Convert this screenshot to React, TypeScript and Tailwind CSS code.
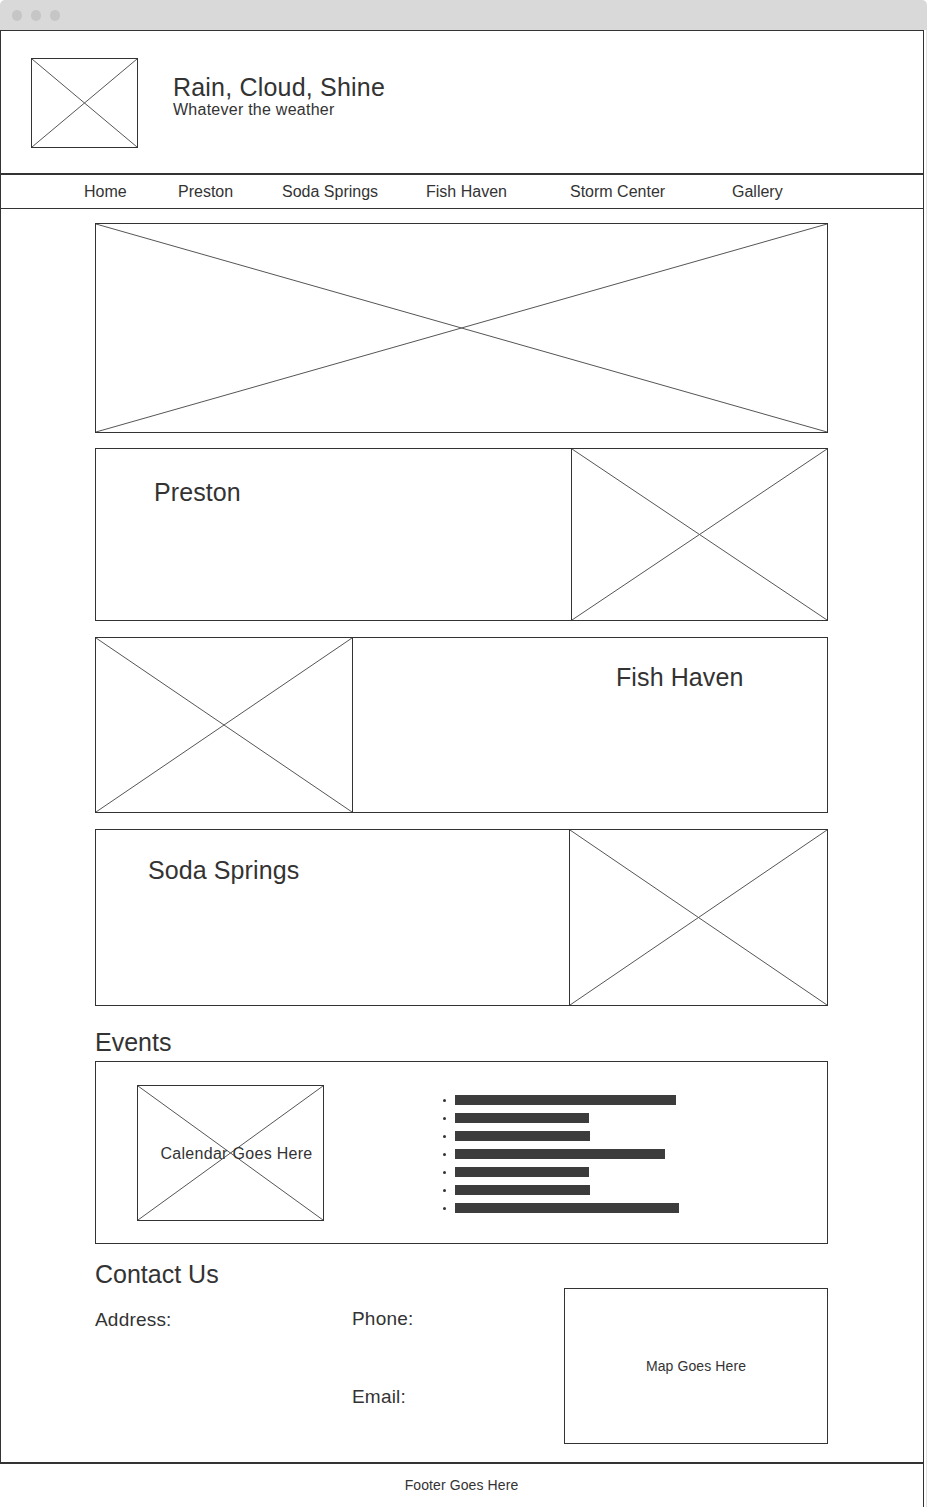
import React from "react";

const font = { fontFamily: '"Liberation Sans", Arial, sans-serif' };

function XLines() {
  return (
    <svg className="absolute inset-0 h-full w-full" viewBox="0 0 100 100" preserveAspectRatio="none">
      <line x1="0" y1="0" x2="100" y2="100" stroke="#555" strokeWidth="1" vectorEffect="non-scaling-stroke" />
      <line x1="100" y1="0" x2="0" y2="100" stroke="#555" strokeWidth="1" vectorEffect="non-scaling-stroke" />
    </svg>
  );
}

function Card({ title, side, imgW, h, pt, pl }: { title: string; side: "left" | "right"; imgW: string; h: string; pt: string; pl: string }) {
  const img = (
    <div className={`relative h-full shrink-0 ${imgW} ${side === "right" ? "border-l border-[#333]" : "border-r border-[#333]"}`}>
      <XLines />
    </div>
  );
  return (
    <div className={`flex w-[733px] border border-[#333] ${h}`}>
      {side === "left" && img}
      <div className={`flex-1 ${pt} ${pl}`}>
        <div className="text-[25px] leading-[28px] tracking-[0.1px] text-[#333]">{title}</div>
      </div>
      {side === "right" && img}
    </div>
  );
}

const bars = [221, 134, 135, 210, 134, 135, 224];

export default function App() {
  return (
    <div className="w-[927px] bg-white" style={font}>
      <div className="flex h-[30px] items-center gap-[9px] rounded-t-[5px] bg-[#d9d9d9] pl-[12px]">
        <span className="h-[11px] w-[10px] rounded-full bg-[#c6c6c6]" />
        <span className="h-[11px] w-[10px] rounded-full bg-[#c6c6c6]" />
        <span className="h-[11px] w-[10px] rounded-full bg-[#c6c6c6]" />
      </div>
      <div className="flex">
        <div className="w-[924px] border-x border-t border-b-2 border-[#333]">
          {/* header */}
          <div className="flex h-[142px] items-start">
            <div className="relative ml-[30px] mt-[27px] h-[90px] w-[107px] border border-[#333]">
              <XLines />
            </div>
            <div className="ml-[35px] mt-[42px] text-[#333]">
              <div className="text-[25px] leading-[28px] tracking-[0.2px]">Rain, Cloud, Shine</div>
              <div className="text-[16px] leading-[18px] tracking-[0.25px]">Whatever the weather</div>
            </div>
          </div>
          {/* nav */}
          <div className="flex h-[36px] items-center border-y border-t-2 border-[#333] pl-[83px] pt-[1px] text-[16px] text-[#333]">
            <span className="w-[94px]">Home</span>
            <span className="w-[104px]">Preston</span>
            <span className="w-[144px]">Soda Springs</span>
            <span className="w-[144px]">Fish Haven</span>
            <span className="w-[162px]">Storm Center</span>
            <span>Gallery</span>
          </div>
          {/* main */}
          <div className="ml-[94px] flex w-[733px] flex-col pb-[18px] pt-[14px]">
            <div className="relative h-[210px] w-[733px] border border-[#333]">
              <XLines />
            </div>
            <div className="mt-[15px]">
              <Card title="Preston" side="right" imgW="w-[256px]" h="h-[173px]" pt="pt-[29px]" pl="pl-[58px]" />
            </div>
            <div className="mt-[16px]">
              <Card title="Fish Haven" side="left" imgW="w-[257px]" h="h-[176px]" pt="pt-[25px]" pl="pl-[263px]" />
            </div>
            <div className="mt-[16px]">
              <Card title="Soda Springs" side="right" imgW="w-[258px]" h="h-[177px]" pt="pt-[26px]" pl="pl-[52px]" />
            </div>
            <div className="mt-[22px] text-[25px] leading-[28px] text-[#333]">Events</div>
            <div className="mt-[5px] flex h-[183px] border border-[#333]">
              <div className="relative ml-[41px] mt-[23px] flex h-[136px] w-[187px] items-center justify-center border border-[#333] pl-[12px] pt-[2px]">
                <XLines />
                <span className="relative text-[16px] tracking-[0.3px] text-[#333]">Calendar Goes Here</span>
              </div>
              <ul className="ml-[119px] mt-[29px] flex flex-col">
                {bars.map((w, i) => (
                  <li key={i} className="flex h-[18px] items-center">
                    <span className="h-[3px] w-[3px] rounded-full bg-[#333]" />
                    <span className="ml-[9px] h-[10px] bg-[#3c3c3c]" style={{ width: w }} />
                  </li>
                ))}
              </ul>
            </div>
            <div className="mt-[16px] text-[25px] leading-[28px] text-[#333]">Contact Us</div>
            <div className="flex text-[19px] leading-[22px] tracking-[0.2px] text-[#333]">
              <div className="w-[257px] pt-[21px]">Address:</div>
              <div className="w-[212px] pt-[20px]">
                <div>Phone:</div>
                <div className="mt-[56px]">Email:</div>
              </div>
              <div className="flex h-[156px] w-[264px] items-center justify-center border border-[#333] text-[14px] tracking-[0.1px]">
                Map Goes Here
              </div>
            </div>
          </div>
        </div>
        <div className="w-[3px] border-r border-[#e2e2e2]" />
      </div>
      <div className="flex">
        <div className="flex h-[44px] w-[924px] items-center justify-center border-r border-[#333] pb-[2px] text-[14px] tracking-[0.1px] text-[#333]">
          Footer Goes Here
        </div>
        <div className="w-[3px] border-r border-[#e2e2e2]" />
      </div>
    </div>
  );
}
